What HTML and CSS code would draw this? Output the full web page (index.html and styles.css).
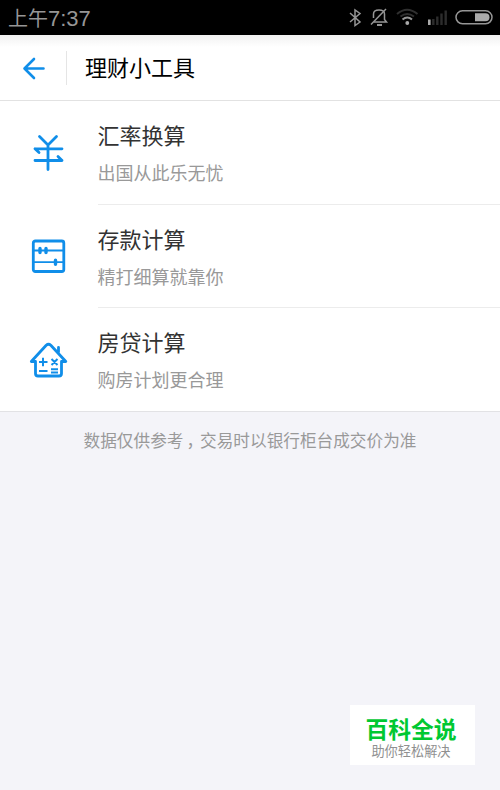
FILE: index.html
```html
<!DOCTYPE html>
<html lang="zh-CN">
<head>
<meta charset="utf-8">
<title>理财小工具</title>
<link rel="stylesheet" href="styles.css">
</head>
<body>
<div class="status">
  <div class="time"><span class="ampm">上午</span><span class="clock">7:37</span></div>
  <svg class="indicators" viewBox="340 0 160 34" fill="none" stroke="#969696" stroke-width="1.5">
    <path d="M350 13l10 9-5 3.500V10l5 3.500-10 8.500"/>
    <path d="M374 22h12.500l-2-2.500v-5.500q0-4-5.500-4t-5.500 4v4"/>
    <path d="M371 24.500l15-15.500" />
    <path d="M377 25h5" stroke-width="2"/>
    <path d="M397 14q10-8.500 20.500 0M400.500 16.500q6.500-5 13.500 0" stroke="#303030" stroke-width="2"/>
    <path d="M402.500 19.500q4.800-4 9.500 0" stroke-width="2"/>
    <circle cx="407.300" cy="23" r="1.900" fill="#aaa" stroke="none"/>
    <path d="M429.300 25v-5.500" stroke="#aaa" stroke-width="2.600"/>
    <path d="M433.300 25v-6M437.300 25v-8.500M441.500 25V13.500M445.700 25V10.500" stroke="#2c2c2c" stroke-width="2.400"/>
    <rect x="456" y="10.800" width="36" height="13" rx="6.500"/>
    <path d="M475 13.300h10.500a4 4 0 0 1 0 8H475z" fill="#aaa" stroke="none"/>
  </svg>
</div>
<header class="bar">
  <svg class="back" viewBox="0 0 24 24"><path d="M21.500 12.500H3M12 3L2.500 12.500l9.500 9.500"/></svg>
  <h1 class="title">理财小工具</h1>
</header>
<main class="list">
  <a class="row">
    <svg class="icon" viewBox="0 0 40 40"><path d="M10.500 4.500l8.500 8.500L27.500 4.500M19 13v24.500M6 16.800h27M6 16.800l4 3.700M6 28.500h27M33 28.500l-4-4"/></svg>
    <div class="text"><h2>汇率换算</h2><p>出国从此乐无忧</p></div>
  </a>
  <a class="row">
    <svg class="icon" viewBox="0 0 40 40"><rect x="4.300" y="5" width="30.500" height="30.500" rx="2"/><path class="thin" d="M4.500 14.500h30M4.500 26.200h30"/><path class="bead" d="M11 12.500v4M17 12.500v4M26.500 24.200v4"/></svg>
    <div class="text"><h2>存款计算</h2><p>精打细算就靠你</p></div>
  </a>
  <a class="row">
    <svg class="icon" viewBox="0 0 40 40"><path d="M6.500 22.500H2.300L17.200 6.300q2.300-2 4.600 0l15 16.200h-4.300V34.500q0 2.500-2.500 2.500H9Q6.500 37 6.500 34.500zM29.500 13V8.500"/><path class="sign" d="M10 23h8.500M14 18.800v8.500M22.500 20l6 6M28.500 20l-6 6M10 32h8.500M22 30.300h7M22 33.500h7"/></svg>
    <div class="text"><h2>房贷计算</h2><p>购房计划更合理</p></div>
  </a>
</main>
<p class="note">数据仅供参考<span class="comma">，</span>交易时以银行柜台成交价为准</p>
<aside class="brand"><strong>百科全说</strong><span>助你轻松解决</span></aside>
</body>
</html>
```
FILE: styles.css
```css
* { box-sizing: border-box; }
body {
  margin: 0;
  height: 790px;
  display: flex;
  flex-direction: column;
  background: #f4f4f9;
  font-family: "Noto Sans CJK SC", sans-serif;
  overflow: hidden;
}
h1, h2, p { margin: 0; font-weight: 400; white-space: nowrap; }
.status {
  height: 35px;
  flex: none;
  display: flex;
  justify-content: space-between;
  background: #000;
  color: #969696;
}
.time { display: flex; padding-left: 8px; line-height: 36px; }
.ampm { font-size: 20px; }
.clock { font-family: "Liberation Sans", sans-serif; font-size: 22px; line-height: 37px; }
.indicators { width: 160px; height: 34px; }
.bar {
  height: 66px;
  flex: none;
  display: flex;
  align-items: center;
  padding-left: 22px;
  border-bottom: 1px solid #e2e2e2;
  background: linear-gradient(#f1f1f1, #fff 12px);
}
.back {
  width: 24px;
  height: 24px;
  fill: none;
  stroke: #108ee9;
  stroke-width: 2.6;
  stroke-linecap: round;
  stroke-linejoin: round;
}
.title {
  margin-left: 20px;
  padding-left: 18px;
  border-left: 1px solid #e5e5e5;
  color: #000;
  font-size: 22px;
  line-height: 30px;
  padding-bottom: 4px;
}
.list { flex: none; background: #fff; border-bottom: 1px solid #e2e2e5; }
.row { display: flex; height: 103.5px; padding-left: 29px; }
.row:last-child { height: 103px; }
.icon {
  width: 40px;
  height: 40px;
  margin-top: 31px;
  fill: none;
  stroke: #108ee9;
  stroke-width: 2.8;
  stroke-linecap: round;
  stroke-linejoin: round;
}
.thin { stroke-width: 1.8; }
.bead { stroke-width: 3.4; }
.sign { stroke-width: 2; stroke-linecap: butt; }
.text { flex: 1; margin-left: 28.5px; padding-top: 16px; border-bottom: 1px solid #ececec; }
.row:last-child .text { border-bottom: 0; }
.text h2 { font-size: 22px; line-height: 34px; color: #333; }
.text p { margin-top: 7px; font-size: 18px; line-height: 28px; color: #999; }
.note {
  margin-top: 16px;
  text-align: center;
  font-size: 16.65px;
  line-height: 24px;
  color: #999;
}
.comma { padding-left: 3px; margin-right: -3px; }
.brand {
  width: 125px;
  height: 60px;
  margin: auto 25px 25px auto;
  padding-right: 3px;
  display: flex;
  flex-direction: column;
  align-items: center;
  background: #fff;
  white-space: nowrap;
}
.brand strong { margin-top: 9px; font-size: 22.8px; line-height: 30px; color: #00c832; }
.brand span { font-size: 13.2px; line-height: 14px; color: #909090; }
```
